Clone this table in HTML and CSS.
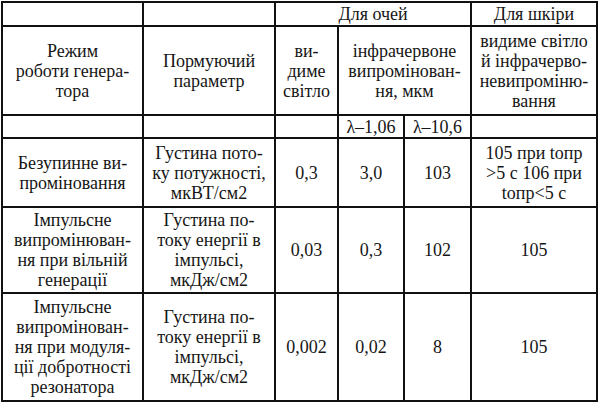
FILE: index.html
```html
<!DOCTYPE html>
<html>
<head>
<meta charset="utf-8">
<link rel="stylesheet" href="styles.css">
</head>
<body>
<table class="norms">
  <colgroup>
    <col class="c1"><col class="c2"><col class="c3"><col class="c4"><col class="c5"><col class="c6">
  </colgroup>
  <tr class="r1">
    <td></td>
    <td></td>
    <td colspan="3">Для очей</td>
    <td>Для шкіри</td>
  </tr>
  <tr class="r2">
    <td>Режим<br>роботи генера-<br>тора</td>
    <td>Пормуючий<br>параметр</td>
    <td>ви-<br>диме<br>світло</td>
    <td colspan="2">інфрачервоне<br>випромінован-<br>ня, мкм</td>
    <td>видиме світло<br>й інфрачерво-<br>невипроміню-<br>вання</td>
  </tr>
  <tr class="r3">
    <td></td>
    <td></td>
    <td></td>
    <td>λ–1,06</td>
    <td>λ–10,6</td>
    <td></td>
  </tr>
  <tr class="r4">
    <td>Безупинне ви-<br>проміновання</td>
    <td>Густина пото-<br>ку потужності,<br>мкВТ/см2</td>
    <td>0,3</td>
    <td>3,0</td>
    <td>103</td>
    <td>105 при tопр<br>&gt;5 с 106 при<br>tопр&lt;5 с</td>
  </tr>
  <tr class="r5">
    <td>Імпульсне<br>випромінюван-<br>ня при вільній<br>генерації</td>
    <td>Густина по-<br>току енергії в<br>імпульсі,<br>мкДж/см2</td>
    <td>0,03</td>
    <td>0,3</td>
    <td>102</td>
    <td>105</td>
  </tr>
  <tr class="r6">
    <td>Імпульсне<br>випромінован-<br>ня при модуля-<br>ції добротності<br>резонатора</td>
    <td>Густина по-<br>току енергії в<br>імпульсі,<br>мкДж/см2</td>
    <td>0,002</td>
    <td>0,02</td>
    <td>8</td>
    <td>105</td>
  </tr>
</table>
</body>
</html>
```
FILE: styles.css
```css
html, body {
  margin: 0;
  padding: 0;
  background: #ffffff;
}
body {
  padding: 1px 0 0 1px;
}
.norms {
  border-collapse: collapse;
  table-layout: fixed;
  width: 597px;
  font-family: "Liberation Serif", serif;
  font-size: 18px;
  line-height: 20px;
  color: #161616;
}
.norms td {
  font-family: "Liberation Serif", serif;
  border: 2px solid #111111;
  padding: 0;
  text-align: center;
  vertical-align: middle;
  white-space: nowrap;
  overflow: hidden;
}
.c1 { width: 141px; }
.c2 { width: 132px; }
.c3 { width: 63px; }
.c4 { width: 66px; }
.c5 { width: 67px; }
.c6 { width: 126px; }
.r1 { height: 24px; }
.r2 { height: 89px; }
.r3 { height: 23px; }
.r4 { height: 69px; }
.r5 { height: 86px; }
.r6 { height: 108px; }
```
